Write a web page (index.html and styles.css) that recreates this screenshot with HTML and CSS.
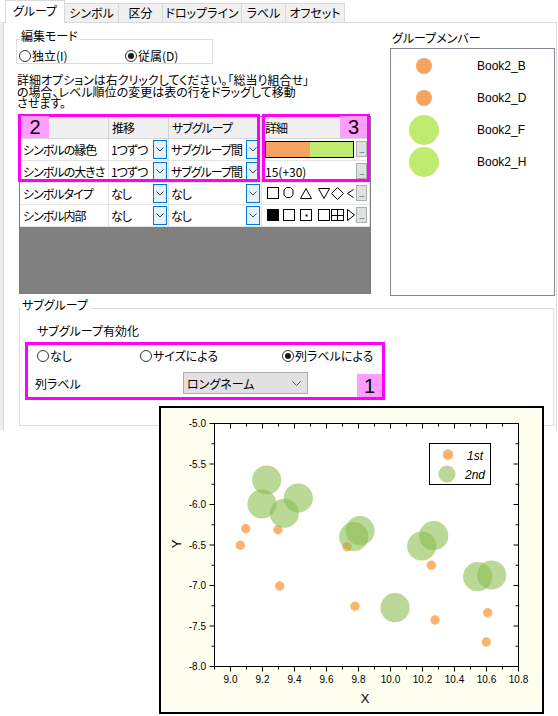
FILE: index.html
```html
<!DOCTYPE html>
<html lang="ja">
<head>
<meta charset="utf-8">
<title>グループ</title>
<link rel="stylesheet" href="styles.css">
</head>
<body>
<div class="tabs">
  <div class="tab active tw60">グループ</div>
  <div class="tab tw55">シンボル</div>
  <div class="tab tw45">区分</div>
  <div class="tab tw80">ドロップライン</div>
  <div class="tab tw45">ラベル</div>
  <div class="tab tw60">オフセット</div>
</div>
<div class="frame">
  <div class="panel">
    <div class="top">
      <div class="leftcol">
        <fieldset class="gbox mode">
          <legend>編集モード</legend>
          <div class="radios">
            <div class="radio r-ind"><span class="circ"></span>独立(I)</div>
            <div class="radio"><span class="circ on"></span>従属(D)</div>
          </div>
        </fieldset>
        <div class="hint">
          <div class="hl">詳細オプションは右クリックしてください。「総当り組合せ」</div>
          <div class="hl">の場合、レベル順位の変更は表の行をドラッグして移動</div>
          <div class="hl">させます。</div>
        </div>
        <div class="gridwrap">
          <div class="grid">
            <div class="c h"></div>
            <div class="c h">推移</div>
            <div class="c h">サブグループ</div>
            <div class="c h">詳細</div>

            <div class="c">シンボルの縁色</div>
            <div class="c dd c2"><span>1つずつ</span><span class="ddb"><svg width="8" height="5" viewBox="0 0 8 5"><path d="M0.5 0.5L4 4L7.5 0.5" fill="none" stroke="#444" stroke-width="1"/></svg></span></div>
            <div class="c dd c3"><span>サブグループ間</span><span class="ddb"><svg width="8" height="5" viewBox="0 0 8 5"><path d="M0.5 0.5L4 4L7.5 0.5" fill="none" stroke="#444" stroke-width="1"/></svg></span></div>
            <div class="c det"><span class="cbar"><span class="cb-o"></span><span class="cb-g"></span></span><span class="eb">...</span></div>

            <div class="c">シンボルの大きさ</div>
            <div class="c dd c2"><span>1つずつ</span><span class="ddb"><svg width="8" height="5" viewBox="0 0 8 5"><path d="M0.5 0.5L4 4L7.5 0.5" fill="none" stroke="#444" stroke-width="1"/></svg></span></div>
            <div class="c dd c3"><span>サブグループ間</span><span class="ddb"><svg width="8" height="5" viewBox="0 0 8 5"><path d="M0.5 0.5L4 4L7.5 0.5" fill="none" stroke="#444" stroke-width="1"/></svg></span></div>
            <div class="c det"><span class="dtext">15(+30)</span><span class="eb">...</span></div>

            <div class="c">シンボルタイプ</div>
            <div class="c dd c2"><span>なし</span><span class="ddb"><svg width="8" height="5" viewBox="0 0 8 5"><path d="M0.5 0.5L4 4L7.5 0.5" fill="none" stroke="#444" stroke-width="1"/></svg></span></div>
            <div class="c dd c3"><span>なし</span><span class="ddb"><svg width="8" height="5" viewBox="0 0 8 5"><path d="M0.5 0.5L4 4L7.5 0.5" fill="none" stroke="#444" stroke-width="1"/></svg></span></div>
            <div class="c det"><svg class="syms" width="88" height="14" viewBox="0 0 88 14">
              <g fill="none" stroke="#000" stroke-width="1">
                <rect x="0.5" y="1.5" width="11" height="11"/>
                <path d="M19.5 1.5h4l2.5 2.5v5l-2.5 2.5h-4l-2.5-2.5v-5z"/>
                <path d="M33.5 12.5h11l-5.5-10z"/>
                <path d="M51.5 2.5h11l-5.5 10z"/>
                <path d="M64.5 7.5l6-6 6 6-6 6z"/>
                <path d="M86.5 3.5l-6 4 6 4"/>
              </g></svg><span class="eb">...</span></div>

            <div class="c">シンボル内部</div>
            <div class="c dd c2"><span>なし</span><span class="ddb"><svg width="8" height="5" viewBox="0 0 8 5"><path d="M0.5 0.5L4 4L7.5 0.5" fill="none" stroke="#444" stroke-width="1"/></svg></span></div>
            <div class="c dd c3"><span>なし</span><span class="ddb"><svg width="8" height="5" viewBox="0 0 8 5"><path d="M0.5 0.5L4 4L7.5 0.5" fill="none" stroke="#444" stroke-width="1"/></svg></span></div>
            <div class="c det"><svg class="syms" width="88" height="14" viewBox="0 0 88 14">
              <rect x="0" y="1" width="12" height="12" fill="#000"/>
              <g fill="none" stroke="#000" stroke-width="1">
                <rect x="16.5" y="1.5" width="11" height="11"/>
                <rect x="33.5" y="1.5" width="11" height="11"/>
                <rect x="51.5" y="1.5" width="11" height="11"/>
                <rect x="64.5" y="1.5" width="12" height="11"/>
                <path d="M70.5 1.5v11M64.5 7.5h12"/>
                <path d="M80.5 1.5v11l7-5.5z"/>
              </g>
              <rect x="38.5" y="6.5" width="2" height="2" fill="#000"/>
              </svg><span class="eb">...</span></div>
          </div>
          <div class="mark m2"></div>
          <div class="mark m3"></div>
          <div class="badge b2">2</div>
          <div class="badge b3">3</div>
        </div>
      </div>
      <div class="rightcol">
        <div class="mtitle">グループメンバー</div>
        <div class="members">
          <div class="mrow"><span class="mico"><span class="dot s"></span></span><span class="mlabel">Book2_B</span></div>
          <div class="mrow"><span class="mico"><span class="dot s"></span></span><span class="mlabel">Book2_D</span></div>
          <div class="mrow"><span class="mico"><span class="dot l"></span></span><span class="mlabel">Book2_F</span></div>
          <div class="mrow"><span class="mico"><span class="dot l"></span></span><span class="mlabel">Book2_H</span></div>
        </div>
      </div>
    </div>
    <fieldset class="gbox sub">
      <legend>サブグループ</legend>
      <div class="subtitle">サブグループ有効化</div>
      <div class="hl1">
        <div class="radios">
          <div class="radio r-a"><span class="circ"></span>なし</div>
          <div class="radio r-b"><span class="circ"></span>サイズによる</div>
          <div class="radio"><span class="circ on"></span>列ラベルによる</div>
        </div>
        <div class="lrow">
          <span class="llabel">列ラベル</span>
          <div class="combo"><span>ロングネーム</span><svg width="9" height="5" viewBox="0 0 9 5"><path d="M0.5 0.5L4.5 4.5L8.5 0.5" fill="none" stroke="#555" stroke-width="1"/></svg></div>
        </div>
        <div class="badge b1">1</div>
      </div>
    </fieldset>
  </div>
</div>

<div class="chart">
<svg width="385" height="308" viewBox="159 406 385 308">
  <rect x="160" y="407" width="383" height="306" fill="#fefeef" stroke="#000" stroke-width="2"/>
  <rect x="214.5" y="423.5" width="304" height="243" fill="#fff" stroke="#000" stroke-width="1"/>
  <path fill="none" stroke="#000" stroke-width="1" d="
    M230.5 666.5v5M262.5 666.5v5M294.5 666.5v5M326.5 666.5v5M358.5 666.5v5M390.5 666.5v5M422.5 666.5v5M454.5 666.5v5M486.5 666.5v5M518.5 666.5v5
    M214.5 666.5v3M246.5 666.5v3M278.5 666.5v3M310.5 666.5v3M342.5 666.5v3M374.5 666.5v3M406.5 666.5v3M438.5 666.5v3M470.5 666.5v3M502.5 666.5v3
    M230.5 423.5v5M262.5 423.5v5M294.5 423.5v5M326.5 423.5v5M358.5 423.5v5M390.5 423.5v5M422.5 423.5v5M454.5 423.5v5M486.5 423.5v5
    M246.5 423.5v3M278.5 423.5v3M310.5 423.5v3M342.5 423.5v3M374.5 423.5v3M406.5 423.5v3M438.5 423.5v3M470.5 423.5v3M502.5 423.5v3
    M214.5 423.5h-5M214.5 464h-5M214.5 504.5h-5M214.5 545h-5M214.5 585.5h-5M214.5 626h-5M214.5 666.5h-5
    M214.5 443.75h-3M214.5 484.25h-3M214.5 524.75h-3M214.5 565.25h-3M214.5 605.75h-3M214.5 646.25h-3
    M518.5 464h-5M518.5 504.5h-5M518.5 545h-5M518.5 585.5h-5M518.5 626h-5
    M518.5 443.75h-3M518.5 484.25h-3M518.5 524.75h-3M518.5 565.25h-3M518.5 605.75h-3M518.5 646.25h-3"/>
  <g class="tl" text-anchor="end">
    <text x="206" y="427">-5.0</text>
    <text x="206" y="467.5">-5.5</text>
    <text x="206" y="508">-6.0</text>
    <text x="206" y="548.5">-6.5</text>
    <text x="206" y="589">-7.0</text>
    <text x="206" y="629.5">-7.5</text>
    <text x="206" y="670">-8.0</text>
  </g>
  <g class="tl" text-anchor="middle">
    <text x="230.5" y="683">9.0</text>
    <text x="262.5" y="683">9.2</text>
    <text x="294.5" y="683">9.4</text>
    <text x="326.5" y="683">9.6</text>
    <text x="358.5" y="683">9.8</text>
    <text x="390.5" y="683">10.0</text>
    <text x="422.5" y="683">10.2</text>
    <text x="454.5" y="683">10.4</text>
    <text x="486.5" y="683">10.6</text>
    <text x="518.5" y="683">10.8</text>
  </g>
  <text class="at" x="365" y="703" text-anchor="middle">X</text>
  <text class="at" x="0" y="0" text-anchor="middle" transform="translate(181 544) rotate(-90)">Y</text>
  <g fill="#fdb26e">
    <circle cx="240.3" cy="545.3" r="4.7"/>
    <circle cx="245.7" cy="528.7" r="4.7"/>
    <circle cx="278" cy="529.7" r="4.7"/>
    <circle cx="279.7" cy="586" r="4.7"/>
    <circle cx="347" cy="546.7" r="4.7"/>
    <circle cx="355" cy="606.3" r="4.7"/>
    <circle cx="431.3" cy="565.3" r="4.7"/>
    <circle cx="435" cy="620" r="4.7"/>
    <circle cx="487.7" cy="612.7" r="4.7"/>
    <circle cx="486.3" cy="642" r="4.7"/>
  </g>
  <g fill="#8cbe50" fill-opacity="0.6">
    <circle cx="266.7" cy="480" r="14.6"/>
    <circle cx="262" cy="504" r="14.6"/>
    <circle cx="284.3" cy="513.3" r="14.6"/>
    <circle cx="298.3" cy="498" r="14.6"/>
    <circle cx="353.7" cy="536.7" r="14.6"/>
    <circle cx="360" cy="530.7" r="14.6"/>
    <circle cx="421.7" cy="546" r="14.6"/>
    <circle cx="433.7" cy="535.7" r="14.6"/>
    <circle cx="477.7" cy="576.7" r="14.6"/>
    <circle cx="491.7" cy="575" r="14.6"/>
    <circle cx="395" cy="607.7" r="14.6"/>
  </g>
  <rect x="429.5" y="443.5" width="61" height="41" fill="#fff" stroke="#000" stroke-width="1"/>
  <circle cx="448" cy="454.5" r="5.3" fill="#fdb26e"/>
  <circle cx="447" cy="474" r="8.6" fill="#8cbe50" fill-opacity="0.6"/>
  <text class="lg" x="467" y="460">1st</text>
  <text class="lg" x="465" y="479">2nd</text>
</svg>
</div>
</body>
</html>
```
FILE: styles.css
```css
* { box-sizing: border-box; }
html, body { margin: 0; padding: 0; background: #fff; }
body {
  width: 558px;
  height: 716px;
  position: relative;
  overflow: hidden;
  font-family: "Noto Sans CJK JP", "Noto Sans", sans-serif;
  font-size: 12px;
  color: #000;
  font-feature-settings: "palt";
}

/* tabs */
.tabs { display: flex; align-items: flex-end; height: 22px; padding-left: 5px; position: relative; z-index: 2; }
.tab {
  height: 19px;
  border: 1px solid #d9d9d9;
  border-bottom: none;
  background: #f0f0f0;
  margin-left: -1px;
  line-height: 17px;
  text-align: center;
  white-space: nowrap;
}
.tab:first-child { margin-left: 0; }
.tab.active { height: 23px; background: #fff; margin-bottom: -1px; line-height: 19px; }
.tw60 { width: 60px; }
.tw55 { width: 55px; }
.tw45 { width: 45px; }
.tw80 { width: 80px; }

/* frame */
.frame {
  height: 408px;
  padding-left: 3px;
  padding-right: 1px;
  background: linear-gradient(to right, #ededed 3px, #fff 3px);
}
.panel { height: 100%; border: 1px solid #d9d9d9; border-bottom: none; background: #fff; }
.top { display: flex; }
.leftcol { width: 386px; padding-left: 12px; }
.rightcol { width: 165px; }

/* group boxes */
.gbox { border: 1px solid #dcdcdc; margin: 0; min-width: 0; }
.gbox legend { padding: 0 2px 6px 1px; margin-left: 1px; line-height: 14px; }
.mode { margin-top: 6px; width: 197px; padding: 0 0 1px 2px; }
.radios { display: flex; align-items: center; height: 13px; }
.radio { display: flex; align-items: center; line-height: 13px; white-space: nowrap; }
.circ {
  width: 12px; height: 12px;
  border: 1px solid #333;
  border-radius: 50%;
  background: #fff;
  margin-right: 1px;
  position: relative;
  flex: none;
}
.circ.on::after {
  content: "";
  position: absolute;
  left: 2px; top: 2px;
  width: 6px; height: 6px;
  border-radius: 50%;
  background: #1a1a1a;
}
.r-ind { width: 106px; }

.hint { margin: 10px 0 0 1px; white-space: nowrap; }
.hl { height: 11.5px; line-height: 11.5px; }

/* grid */
.gridwrap {
  position: relative;
  margin: 7px 0 0 3px;
  width: 352px;
  height: 178px;
  border: 1px solid #7a7a7a;
  background: #808080;
}
.grid { display: grid; grid-template-columns: 89px 60px 93px 108px; background: #fff; letter-spacing: -1px; }
.c {
  height: 22px;
  border-right: 1px solid #e3e3e3;
  border-bottom: 1px solid #e3e3e3;
  display: flex;
  align-items: center;
  padding-left: 3px;
  white-space: nowrap;
  overflow: hidden;
}
.c.h { background: #f0f0f0; border-color: #d5d5d5; }
.c.c2 { padding-left: 2px; }
.c.c3 { padding-left: 2px; }
.c.dd { justify-content: space-between; padding-right: 1px; }
.ddb {
  width: 14px; height: 19px;
  border: 1px solid #0078d7;
  background: #e5f1fb;
  display: flex; align-items: center; justify-content: center;
  flex: none;
}
.c.det { padding-left: 3px; padding-right: 2px; letter-spacing: 0; }
.cbar { display: flex; width: 89px; height: 17px; border: 1px solid #000; margin-right: 2px; }
.cb-o { width: 44px; background: #f4a460; }
.cb-g { flex: 1; background: #bfec70; }
.dtext { flex: 1; }
.syms { margin-left: 2px; margin-right: 1px; flex: none; }
.eb {
  width: 11px; height: 16px;
  background: #e1e1e1;
  border: 1px solid #adadad;
  font-family: "Liberation Sans", sans-serif;
  font-size: 8px;
  line-height: 17px;
  text-align: center;
  letter-spacing: -0.5px;
  flex: none;
}

.mark { position: absolute; border: 3px solid #ff00ff; pointer-events: none; }
.m2 { left: -2px; top: -3px; width: 242px; height: 68px; }
.m3 { left: 242px; top: -3px; width: 108px; height: 68px; }
.badge {
  position: absolute;
  background: #ff9eff;
  font-family: "Liberation Sans", sans-serif;
  font-size: 20px;
  line-height: 22px;
  text-align: center;
  letter-spacing: 0;
}
.b2 { left: 1px; top: -1px; width: 28px; height: 22px; }
.b3 { left: 320px; top: -1px; width: 27px; height: 22px; }

/* members */
.mtitle { margin: 8px 0 0 2px; line-height: 14px; }
.members { margin-top: 3px; height: 248px; border: 1px solid #828790; padding-top: 1px; }
.mrow { display: flex; align-items: center; height: 32px; }
.mico { width: 66px; display: flex; justify-content: center; }
.dot { border-radius: 50%; display: block; }
.dot.s { width: 16px; height: 16px; background: #f4a460; }
.dot.l { width: 30px; height: 30px; background: #bfec70; }
.mlabel { margin-left: 20px; font-family: "Liberation Sans", sans-serif; font-size: 12px; }

/* subgroup */
.sub { margin: 2px 0 0 15px; width: 535px; height: 128px; padding: 0; }
.subtitle { margin: 6px 0 0 17px; line-height: 14px; }
.hl1 {
  position: relative;
  margin: 4px 0 0 5px;
  width: 360px;
  height: 58px;
  border: 3px solid #ff00ff;
  padding: 4px 0 0 9px;
}
.r-a { width: 103px; }
.r-b { width: 142px; }
.lrow { display: flex; align-items: center; margin-top: 10px; height: 22px; }
.llabel { margin-left: -2px; width: 148px; }
.combo {
  width: 125px; height: 22px;
  background: #e1e1e1;
  border: 1px solid #adadad;
  display: flex; align-items: center; justify-content: space-between;
  padding: 0 6px 0 3px;
}
.b1 { right: 0; bottom: 0; width: 25px; height: 23px; line-height: 24px; }

/* chart */
.chart { position: absolute; left: 159px; top: 406px; width: 385px; height: 308px; }
.chart svg { display: block; }
.tl { font-family: "Liberation Sans", sans-serif; font-size: 10px; fill: #000; }
.at { font-family: "Liberation Sans", sans-serif; font-size: 13px; fill: #000; }
.lg { font-family: "Liberation Sans", sans-serif; font-size: 12px; font-style: italic; fill: #000; }
```
